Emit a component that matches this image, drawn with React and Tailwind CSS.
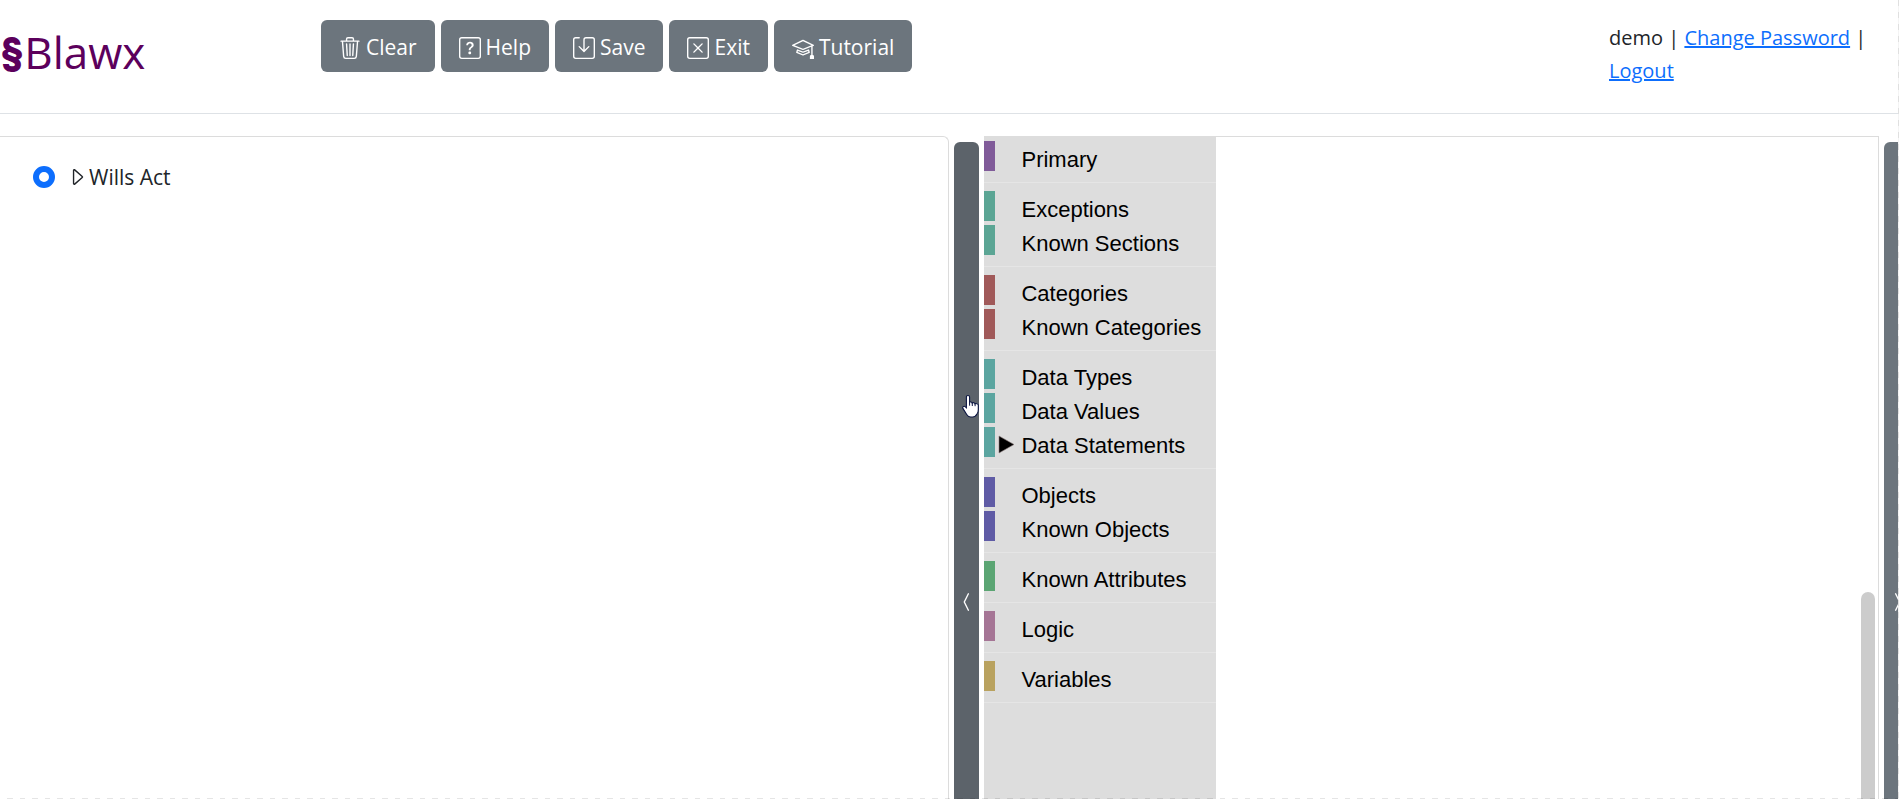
import {
  BsTrash3,
  BsQuestionSquare,
  BsSave,
  BsXSquare,
  BsMortarboard,
  BsCaretRight,
  BsChevronCompactLeft,
  BsChevronCompactRight,
} from "react-icons/bs";

const actions = [
  { label: "Clear", Icon: BsTrash3 },
  { label: "Help", Icon: BsQuestionSquare },
  { label: "Save", Icon: BsSave },
  { label: "Exit", Icon: BsXSquare },
  { label: "Tutorial", Icon: BsMortarboard },
];

const groups = [
  { color: "bg-[#805b99]", items: ["Primary"] },
  { color: "bg-[#5ba594]", items: ["Exceptions", "Known Sections"] },
  { color: "bg-[#a05959]", items: ["Categories", "Known Categories"] },
  { color: "bg-[#5ba5a0]", items: ["Data Types", "Data Values", "Data Statements"] },
  { color: "bg-[#5f5ba5]", items: ["Objects", "Known Objects"] },
  { color: "bg-[#5ba573]", items: ["Known Attributes"] },
  { color: "bg-[#a57595]", items: ["Logic"] },
  { color: "bg-[#b9a25f]", items: ["Variables"] },
];

function Header() {
  return (
    <header className="flex h-[114px] shrink-0 items-start border-b border-[#dee2e6]">
      <a
        href="#home"
        className="flex w-[321px] items-center pt-5 leading-16 text-[#5c005c]"
      >
        <span className="font-['Inter',sans-serif] text-[40px] font-extrabold">§</span>
        <span className="text-[44px] font-medium">Blawx</span>
      </a>
      <nav className="flex gap-[6px] pt-5">
        {actions.map(({ label, Icon }) => (
          <button
            key={label}
            type="button"
            className="flex h-[52px] items-center gap-[5px] rounded-md bg-[#6c757d] px-[18px] pt-1 text-[21px] text-white"
          >
            <Icon className="size-[22px]" />
            {label}
          </button>
        ))}
      </nav>
      <div className="ml-auto w-[290px] pt-[21px] text-[20px] leading-[33px] text-[#212529]">
        demo |{" "}
        <a href="#password" className="text-[#0d6efd] underline">
          Change Password
        </a>{" "}
        |{" "}
        <a href="#logout" className="text-[#0d6efd] underline">
          Logout
        </a>
      </div>
    </header>
  );
}

function Outline() {
  return (
    <section className="min-w-0 flex-[949] rounded-tr-md border-t border-r border-[#dcdcdc]">
      <div className="flex items-center pt-6 pl-[33px] text-[21px] leading-8 text-[#212529]">
        <input
          type="radio"
          name="section"
          id="wills-act"
          defaultChecked
          className="mr-[11px] size-[22px] appearance-none rounded-full border-[6px] border-[#0d6efd] bg-white"
        />
        <button type="button" aria-label="Expand" className="mr-px">
          <BsCaretRight className="size-[22px]" />
        </button>
        <label htmlFor="wills-act">Wills Act</label>
      </div>
    </section>
  );
}

function Toolbox() {
  return (
    <ul className="w-[232px] shrink-0 bg-[#dddddd] pt-[5px] font-['Liberation_Sans',Arial,sans-serif] text-[22px] leading-[38px] text-black">
      {groups.map((group) => (
        <li key={group.items[0]} className="mb-2 border-b border-[#e5e5e5] pb-[7px]">
          <ul>
            {group.items.map((item) => (
              <li key={item} className="flex h-[34px] items-start">
                <span className={`h-[30px] w-[11px] ${group.color}`} />
                <span className="flex h-[34px] w-[26px] items-center pl-1">
                  {item === "Data Statements" && (
                    <svg viewBox="0 0 16 18" className="h-[18px] w-4 overflow-visible">
                      <path d="M0 1L15 9.500L0 18Z" fill="#000" stroke="#8a7a7a" strokeWidth="0.6" />
                    </svg>
                  )}
                </span>
                {item}
              </li>
            ))}
          </ul>
        </li>
      ))}
    </ul>
  );
}

function Pointer() {
  return (
    <svg viewBox="0 0 17 24" className="absolute top-[252px] left-2 h-6 w-[17px]">
      <path
        d="M6 1.500c1 0 1.600.6 1.600 1.600v5.200c.3-.5 2.300-.5 2.600.7.5-.6 2.500-.4 2.800.8.600-.5 3.200-.3 3.300 1.300v4.600c0 2-.5 3.300-1.300 4.300-1 1.800-2 3-4.300 3H8.700c-1.900 0-3-.9-4-2.500L.9 14.400c-.7-1.400.9-2.700 2.200-1.800l1.300 1.200V3.100c0-1 .6-1.600 1.600-1.600z"
        fill="#fff"
        stroke="#0a1440"
        strokeWidth="1.100"
      />
      <path d="M7.600 8.500v3.200M10.300 9v3M13.100 10v2.200" stroke="#0a1440" strokeWidth="1" />
    </svg>
  );
}

export default function App() {
  return (
    <div className="relative flex h-screen flex-col overflow-hidden bg-white font-['Open_Sans','Noto_Sans',sans-serif]">
      <Header />
      <main className="flex min-h-0 flex-1 pt-[22px]">
        <Outline />
        <div className="relative mx-[5px] mt-[6px] flex w-[25px] shrink-0">
          <button
            type="button"
            aria-label="Collapse outline"
            className="flex w-full justify-center rounded-t-md bg-[#5c636a] pt-[449px] text-white"
          >
            <BsChevronCompactLeft className="size-[22px]" />
          </button>
          <Pointer />
        </div>
        <section className="flex min-w-0 flex-[895]">
          <Toolbox />
          <div className="flex flex-1 justify-end border-t border-r border-[#dcdcdc] pt-[455px] pr-[3px]">
            <div className="w-[14px] rounded-t-full bg-[#cccccc]" />
          </div>
        </section>
        <div className="mt-[6px] ml-[5px] flex w-[15px] shrink-0 overflow-hidden">
          <button
            type="button"
            aria-label="Expand panel"
            className="flex w-[25px] shrink-0 justify-center rounded-tl-md bg-[#6c757d] pt-[449px] text-white"
          >
            <BsChevronCompactRight className="size-[22px] shrink-0" />
          </button>
        </div>
      </main>
      <div className="pointer-events-none absolute inset-x-0 bottom-0 h-px bg-[repeating-linear-gradient(90deg,transparent_0_7px,#0000001a_7px_13px,transparent_13px_20px,#0000001a_20px_25px)]" />
      <div className="pointer-events-none absolute inset-y-0 right-0 w-px bg-[repeating-linear-gradient(180deg,#e0e0e0_0_6px,#f4f4f4_6px_12px)]" />
    </div>
  );
}
